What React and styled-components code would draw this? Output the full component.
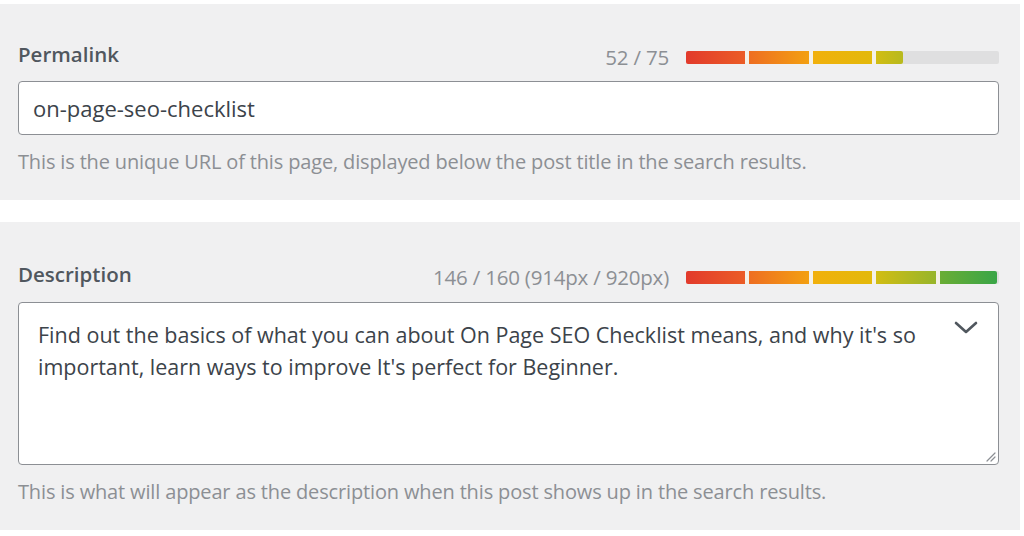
import React from 'react'
import styled, { createGlobalStyle } from 'styled-components'

const GlobalStyle = createGlobalStyle`
  html, body {
    margin: 0;
    padding: 0;
    background: #ffffff;
  }
  body {
    font-family: 'Open Sans', 'Noto Sans', sans-serif;
  }
`

const Page = styled.div`
  width: 1024px;
  height: 536px;
  padding-top: 4px;
  box-sizing: border-box;
  display: flex;
  flex-direction: column;
  gap: 22px;
  overflow: hidden;
`

const Panel = styled.section`
  width: 1020px;
  height: ${(p) => p.$height}px;
  box-sizing: border-box;
  background: #f0f0f1;
  padding: ${(p) => p.$top}px 21px 0 18px;
  display: flex;
  flex-direction: column;
`

const Header = styled.div`
  display: flex;
  align-items: center;
  justify-content: space-between;
  height: 32px;
  margin-bottom: ${(p) => p.$gap}px;
`

const Label = styled.label`
  font-size: 20.5px;
  font-weight: 600;
  color: #50575e;
`

const Meter = styled.div`
  display: flex;
  align-items: center;
  gap: 17px;
  padding-top: 6px;
`

const Count = styled.span`
  font-size: 20.5px;
  color: #8c8f94;
  letter-spacing: -0.2px;
`

const Track = styled.div`
  width: 313px;
  height: 13px;
  background: #dfdfe0;
  border-radius: 2px;
  display: flex;
`

const Fill = styled.div`
  height: 100%;
  overflow: hidden;
  border-radius: 2px;
`

const Segments = styled.div`
  width: 313px;
  height: 100%;
  display: flex;
  gap: 4px;
  background: #f4f1e8;
`

const Segment = styled.div`
  flex: 1;
  height: 100%;
  background: linear-gradient(90deg, ${(p) => p.$from}, ${(p) => p.$to});
`

const Input = styled.div`
  height: 54px;
  box-sizing: border-box;
  background: #fff;
  border: 1px solid #8c8f94;
  border-radius: 4px;
  padding: 0 14px;
  display: flex;
  align-items: center;
  font-size: 22px;
  color: #3c434a;
`

const TextArea = styled.div`
  position: relative;
  height: 163px;
  box-sizing: border-box;
  background: #fff;
  border: 1px solid #8c8f94;
  border-radius: 4px;
  padding: 16px 60px 0 19px;
  font-size: 21.5px;
  line-height: 32px;
  color: #3c434a;
`

const Chevron = styled.svg`
  position: absolute;
  top: 18px;
  right: 20px;
`

const Grip = styled.svg`
  position: absolute;
  right: 2px;
  bottom: 2px;
`

const Help = styled.p`
  margin: ${(p) => p.$top}px 0 0;
  font-size: 20px;
  line-height: 27px;
  color: #8c8f94;
  letter-spacing: -0.15px;
`

const COLORS = [
  ['#e23a2c', '#eb5c26'],
  ['#ee6e22', '#f3a011'],
  ['#f1b00c', '#e3b90b'],
  ['#d2bd13', '#97b52b'],
  ['#6aad35', '#38a548'],
]

function LengthMeter({ label, percent }) {
  return (
    <Meter>
      <Count>{label}</Count>
      <Track>
        <Fill style={{ width: `${percent}%` }}>
          <Segments>
            {COLORS.map(([from, to]) => (
              <Segment key={from} $from={from} $to={to} />
            ))}
          </Segments>
        </Fill>
      </Track>
    </Meter>
  )
}

export default function App() {
  return (
    <Page>
      <GlobalStyle />
      <Panel $height={196} $top={34}>
        <Header $gap={11}>
          <Label>Permalink</Label>
          <LengthMeter label="52 / 75" percent={(52 / 75) * 100} />
        </Header>
        <Input>on-page-seo-checklist</Input>
        <Help $top={13}>
          This is the unique URL of this page, displayed below the post title in
          the search results.
        </Help>
      </Panel>
      <Panel $height={308} $top={36}>
        <Header $gap={12}>
          <Label>Description</Label>
          <LengthMeter label="146 / 160 (914px / 920px)" percent={99.4} />
        </Header>
        <TextArea>
          Find out the basics of what you can about On Page SEO Checklist means,
          and why it's so important, learn ways to improve It's perfect for
          Beginner.
          <Chevron width="24" height="13" viewBox="0 0 24 13">
            <path
              d="M2 2 L12 11 L22 2"
              fill="none"
              stroke="#50575e"
              strokeWidth="2.6"
              strokeLinecap="round"
              strokeLinejoin="round"
            />
          </Chevron>
          <Grip width="12" height="12" viewBox="0 0 12 12">
            <path
              d="M11 3 L3 11 M11 7 L7 11"
              stroke="#8c8f94"
              strokeWidth="1.2"
              strokeLinecap="round"
            />
          </Grip>
        </TextArea>
        <Help $top={13}>
          This is what will appear as the description when this post shows up in
          the search results.
        </Help>
      </Panel>
    </Page>
  )
}
